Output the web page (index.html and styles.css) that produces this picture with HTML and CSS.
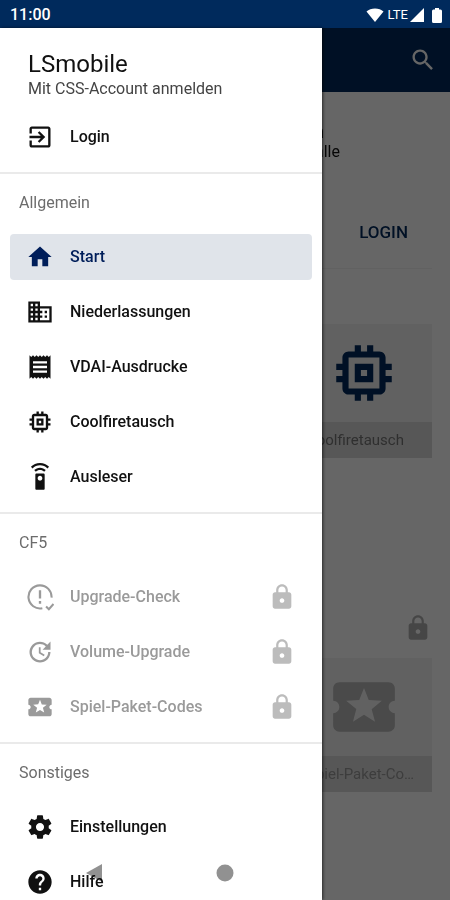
FILE: index.html
```html
<!DOCTYPE html>
<html lang="de">
<head>
<meta charset="utf-8">
<meta name="viewport" content="width=device-width, initial-scale=1">
<title>LSmobile</title>
<link rel="stylesheet" href="styles.css">
</head>
<body>
<svg class="defs" aria-hidden="true">
  <symbol id="lock" viewBox="0 0 24 24"><path d="M18 8h-1V6c0-2.760-2.240-5-5-5S7 3.240 7 6v2H6c-1.100 0-2 .9-2 2v10c0 1.100.9 2 2 2h12c1.100 0 2-.9 2-2V10c0-1.100-.9-2-2-2zm-6 9c-1.100 0-2-.9-2-2s.9-2 2-2 2 .9 2 2-.9 2-2 2zm3.100-9H8.900V6c0-1.710 1.390-3.100 3.100-3.100s3.100 1.390 3.100 3.100v2z"/></symbol>
  <symbol id="chip" viewBox="0 0 24 24"><path d="M15 9H9v6h6V9zm-2 4h-2v-2h2v2zm8-2V9h-2V7c0-1.100-.9-2-2-2h-2V3h-2v2h-2V3H9v2H7c-1.100 0-2 .9-2 2v2H3v2h2v2H3v2h2v2c0 1.100.9 2 2 2h2v2h2v-2h2v2h2v-2h2c1.100 0 2-.9 2-2v-2h2v-2h-2v-2h2zm-4 6H7V7h10v10z"/></symbol>
  <symbol id="ticket" viewBox="0 0 24 24"><path d="M20 12c0-1.100.9-2 2-2V6c0-1.100-.9-2-2-2H4c-1.100 0-1.990.9-1.990 2v4c1.100 0 1.990.9 1.990 2s-.89 2-2 2v4c0 1.100.9 2 2 2h16c1.100 0 2-.9 2-2v-4c-1.100 0-2-.9-2-2zm-4.420 4.800L12 14.500l-3.580 2.300 1.080-4.120-3.290-2.690 4.240-.25L12 5.800l1.540 3.950 4.240.25-3.290 2.690 1.090 4.110z"/></symbol>
</svg>
<div class="screen">
  <header class="status">
    <span class="clock">11:00</span>
    <span class="signals">
      <svg class="wifi" viewBox="0 0 18 14"><path d="M9 14 .5 3.600C2.700 1.600 5.700.5 9 .5s6.300 1.100 8.500 3.100z"/></svg>
      <span class="network">LTE</span>
      <svg class="cell" viewBox="0 0 14 14"><path d="M14 0v14H0z"/></svg>
      <svg class="battery" viewBox="0 0 10 15"><path d="M3 0h4v1.500h1.500Q10 1.500 10 3v10.500q0 1.500-1.500 1.500h-7Q0 15 0 13.500V3q0-1.500 1.500-1.500H3z"/></svg>
    </span>
  </header>
  <div class="stage">
    <main class="page">
      <div class="appbar">
        <button class="search" aria-label="Suchen"><svg class="icon" viewBox="0 0 24 24"><path d="M15.500 14h-.79l-.28-.27C15.410 12.590 16 11.110 16 9.500 16 5.910 13.090 3 9.500 3S3 5.910 3 9.500 5.910 16 9.500 16c1.610 0 3.090-.59 4.230-1.570l.27.28v.79l5 4.990L20.490 19l-4.990-5zm-6 0C7.010 14 5 11.990 5 9.500S7.010 5 9.500 5 14 7.010 14 9.500 11.990 14 9.500 14z"/></svg></button>
      </div>
      <div class="content">
        <section class="intro">
          <div class="intro-text">
            <h2>Jetzt anmelden</h2>
            <p>Funktionen für alle</p>
          </div>
          <button class="login">LOGIN</button>
        </section>
        <article class="tile">
          <div class="tile-art navy"><svg viewBox="0 0 24 24"><use href="#chip"/></svg></div>
          <div class="tile-label">Coolfiretausch</div>
        </article>
        <div class="locked"><svg class="icon"><use href="#lock"/></svg></div>
        <article class="tile off">
          <div class="tile-art"><svg viewBox="0 0 24 24"><use href="#ticket"/></svg></div>
          <div class="tile-label">Spiel-Paket-Codes</div>
        </article>
      </div>
    </main>
    <div class="scrim"></div>
    <nav class="drawer">
      <div class="account">
        <h1>LSmobile</h1>
        <p>Mit CSS-Account anmelden</p>
      </div>
      <a class="item" href="#"><svg class="icon" viewBox="0 0 24 24"><path d="M10.090 15.590 11.500 17l5-5-5-5-1.410 1.410L12.670 11H3v2h9.670zM19 3H5c-1.110 0-2 .9-2 2v4h2V5h14v14H5v-4H3v4c0 1.100.89 2 2 2h14c1.100 0 2-.9 2-2V5c0-1.100-.9-2-2-2z"/></svg><span>Login</span></a>

      <section>
        <h3>Allgemein</h3>
        <a class="item active" href="#"><svg class="icon" viewBox="0 0 24 24"><path d="M10 20v-6h4v6h5v-8h3L12 3 2 12h3v8z"/></svg><span>Start</span></a>
        <a class="item" href="#"><svg class="icon" viewBox="0 0 24 24"><path d="M12 7V3H2v18h20V7H12zM6 19H4v-2h2v2zm0-4H4v-2h2v2zm0-4H4V9h2v2zm0-4H4V5h2v2zm4 12H8v-2h2v2zm0-4H8v-2h2v2zm0-4H8V9h2v2zm0-4H8V5h2v2zm10 12h-8v-2h2v-2h-2v-2h2v-2h-2V9h8v10zm-2-8h-2v2h2v-2zm0 4h-2v2h2v-2z"/></svg><span>Niederlassungen</span></a>
        <a class="item" href="#"><svg class="icon" viewBox="0 0 24 24"><path d="M18 17H6v-2h12v2zm0-4H6v-2h12v2zm0-4H6V7h12v2zM3 22l1.500-1.500L6 22l1.500-1.500L9 22l1.500-1.500L12 22l1.500-1.500L15 22l1.500-1.500L18 22l1.500-1.500L21 22V2l-1.500 1.500L18 2l-1.500 1.500L15 2l-1.500 1.500L12 2l-1.500 1.500L9 2 7.500 3.500 6 2 4.500 3.500 3 2v20z"/></svg><span>VDAI-Ausdrucke</span></a>
        <a class="item" href="#"><svg class="icon"><use href="#chip"/></svg><span>Coolfiretausch</span></a>
        <a class="item" href="#"><svg class="icon" viewBox="0 0 24 24"><path d="M15 9H9c-.55 0-1 .45-1 1v12c0 .55.45 1 1 1h6c.55 0 1-.45 1-1V10c0-.55-.45-1-1-1zm-3 6c-1.100 0-2-.9-2-2s.9-2 2-2 2 .9 2 2-.9 2-2 2zM7.050 6.050l1.410 1.410C9.370 6.560 10.620 6 12 6s2.630.56 3.540 1.460l1.410-1.410C15.680 4.780 13.930 4 12 4s-3.680.78-4.950 2.050zM12 0C8.960 0 6.210 1.230 4.220 3.220l1.410 1.410C7.260 3.010 9.510 2 12 2s4.740 1.010 6.360 2.640l1.410-1.410C17.790 1.230 15.040 0 12 0z"/></svg><span>Ausleser</span></a>
      </section>

      <section>
        <h3>CF5</h3>
        <a class="item disabled" href="#"><svg class="icon" viewBox="0 0 24 24"><path d="M14 21.600A9.900 9.900 0 1 1 21.900 12.500M17.200 20.200l2.400 2.300 4-4.500" fill="none" stroke="currentColor" stroke-width="1.800"/><path d="M11 6.200h2v7h-2zM11 15.500h2v2.200h-2z"/></svg><span>Upgrade-Check</span><svg class="icon lock"><use href="#lock"/></svg></a>
        <a class="item disabled" href="#"><svg class="icon" viewBox="0 0 24 24"><path d="M21 10.120h-6.780l2.740-2.820c-2.730-2.700-7.150-2.800-9.880-.1-2.730 2.710-2.730 7.080 0 9.790s7.150 2.710 9.880 0C18.320 15.650 19 14.080 19 12.100h2c0 1.980-.88 4.550-2.640 6.290-3.510 3.480-9.210 3.480-12.720 0-3.500-3.470-3.530-9.110-.02-12.580s9.140-3.470 12.650 0L21 3v7.120zM12.500 8v4.250l3.500 2.080-.72 1.210L11 13V8h1.500z"/></svg><span>Volume-Upgrade</span><svg class="icon lock"><use href="#lock"/></svg></a>
        <a class="item disabled" href="#"><svg class="icon"><use href="#ticket"/></svg><span>Spiel-Paket-Codes</span><svg class="icon lock"><use href="#lock"/></svg></a>
      </section>

      <section>
        <h3>Sonstiges</h3>
        <a class="item" href="#"><svg class="icon" viewBox="0 0 24 24"><path d="M19.430 12.980c.04-.32.07-.64.07-.98s-.03-.66-.07-.98l2.110-1.650c.19-.15.24-.42.12-.64l-2-3.460c-.12-.22-.39-.3-.61-.22l-2.490 1c-.52-.4-1.080-.73-1.690-.98l-.38-2.650C14.460 2.180 14.250 2 14 2h-4c-.25 0-.46.18-.49.42l-.38 2.650c-.61.25-1.170.59-1.690.98l-2.490-1c-.23-.09-.49 0-.61.22l-2 3.460c-.13.22-.07.49.12.64l2.110 1.650c-.04.32-.07.65-.07.98s.03.66.07.98l-2.110 1.650c-.19.15-.24.42-.12.64l2 3.460c.12.22.39.3.61.22l2.490-1c.52.4 1.080.73 1.690.98l.38 2.650c.03.24.24.42.49.42h4c.25 0 .46-.18.49-.42l.38-2.650c.61-.25 1.170-.59 1.690-.98l2.490 1c.23.09.49 0 .61-.22l2-3.460c.12-.22.07-.49-.12-.64l-2.110-1.650zM12 15.500c-1.930 0-3.500-1.570-3.500-3.500s1.570-3.500 3.500-3.500 3.500 1.570 3.500 3.500-1.570 3.500-3.500 3.500z"/></svg><span>Einstellungen</span></a>
        <a class="item" href="#"><svg class="icon" viewBox="0 0 24 24"><path d="M12 2C6.480 2 2 6.480 2 12s4.480 10 10 10 10-4.480 10-10S17.520 2 12 2zm1 17h-2v-2h2v2zm2.070-7.750-.9.92C13.450 12.900 13 13.500 13 15h-2v-.5c0-1.100.45-2.100 1.170-2.830l1.240-1.260c.37-.36.59-.86.59-1.410 0-1.100-.9-2-2-2s-2 .9-2 2H8c0-2.210 1.790-4 4-4s4 1.790 4 4c0 .88-.36 1.680-.93 2.250z"/></svg><span>Hilfe</span></a>
      </section>
    </nav>
  </div>
  <div class="sysnav">
    <button aria-label="Zurück"><svg viewBox="0 0 18 18"><path d="M17 0v18L1 9z"/></svg></button>
    <button aria-label="Startbildschirm"><svg viewBox="0 0 18 18"><circle cx="9" cy="9" r="8.500"/></svg></button>
  </div>
</div>
</body>
</html>
```
FILE: styles.css
```css
* { box-sizing: border-box; }

body {
  margin: 0;
  font-family: Roboto, "Liberation Sans", sans-serif;
  font-size: 16px;
  line-height: 20px;
  color: #111;
}

h1, h2, h3, p { margin: 0; font-weight: 400; }

button {
  padding: 0;
  border: 0;
  background: none;
  font: inherit;
  color: inherit;
}

svg { display: block; fill: currentColor; flex: none; }
.defs { position: absolute; width: 0; height: 0; }
.icon { width: 28px; height: 28px; }

.screen {
  position: relative;
  display: flex;
  flex-direction: column;
  height: 100vh;
  overflow: hidden;
}

/* Status bar */
.status {
  display: flex;
  align-items: center;
  justify-content: space-between;
  height: 28px;
  padding: 2px 8px 0 10px;
  background: #002a5c;
  color: #fff;
  font-weight: 500;
}
.signals { display: flex; align-items: center; font-size: 13px; font-weight: 400; }
.wifi { width: 18px; height: 14px; }
.network { margin-left: 4px; }
.cell { width: 14px; height: 14px; margin-left: 2px; }
.battery { width: 10px; height: 15px; margin-left: 8px; }

.stage { position: relative; flex: 1; min-height: 0; }

/* Page under the drawer */
.appbar {
  display: flex;
  align-items: center;
  justify-content: flex-end;
  height: 64px;
  padding-right: 13px;
  background: #002a5c;
  color: #fff;
}
.content {
  display: flex;
  flex-direction: column;
  align-items: flex-end;
  padding: 30px 18px;
}
.intro {
  display: flex;
  flex-direction: column;
  align-items: flex-end;
  width: 100%;
  padding-bottom: 14px;
  border-bottom: 1px solid #f3f3f3;
}
.intro-text { padding-right: 92px; text-align: right; }
.intro h2 { font-size: 18px; font-weight: 500; padding-right: 16px; }
.login {
  margin-top: 48px;
  padding: 12px 24px;
  color: #002a5c;
  font-size: 17px;
  font-weight: 500;
}
.tile { width: 136px; margin-top: 55px; background: #f3f3f3; }
.tile-art {
  display: flex;
  align-items: center;
  justify-content: center;
  height: 98px;
  color: #b8b8b8;
}
.tile-art svg { width: 74px; height: 74px; }
.tile-art.navy { color: #002a5c; }
.tile-label {
  padding: 8px 11px;
  background: #d9d9d9;
  color: #777;
  font-size: 15px;
  overflow: hidden;
  text-overflow: ellipsis;
  white-space: nowrap;
}
.locked { margin-top: 156px; color: #b0b0b0; }
.off { margin-top: 16px; }
.off .tile-label { color: #999; }

.scrim {
  position: absolute;
  inset: 0;
  background: rgba(0, 0, 0, .6);
}

/* Drawer */
.drawer {
  position: absolute;
  inset: 0 128px 0 0;
  overflow: hidden;
  padding: 22px 10px 0;
  background: #fff;
  box-shadow: 1px 0 3px rgba(0, 0, 0, .6);
}
.account { padding-left: 18px; margin-bottom: 14px; }
.account h1 { font-size: 24px; line-height: 28px; }
.account p { font-size: 16px; line-height: 22px; color: #444; }

.item {
  display: flex;
  align-items: center;
  gap: 16px;
  height: 46px;
  margin-bottom: 9px;
  padding: 0 16px;
  border-radius: 4px;
  color: #111;
  font-weight: 500;
  text-decoration: none;
}
.item.active { background: #e0e4ea; color: #001e5a; }
.item.disabled { color: #9a9a9a; }
.item .lock { margin-left: auto; color: #bcbcbc; }

.drawer section {
  margin: 12px -10px 0;
  padding: 0 10px;
  border-top: 2px solid #eaeaea;
}
.drawer section .item:last-child { margin-bottom: 0; }
.drawer h3 {
  padding: 19px 9px 21px;
  font-size: 16px;
  color: #6c6c6c;
}

/* System navigation */
.sysnav {
  position: absolute;
  inset: auto 0 0;
  display: grid;
  grid-template-columns: repeat(3, 1fr);
  align-items: center;
  justify-items: center;
  height: 54px;
  padding: 0 28px;
  color: #919191;
  mix-blend-mode: multiply;
}
.sysnav svg { width: 18px; height: 18px; }
```
